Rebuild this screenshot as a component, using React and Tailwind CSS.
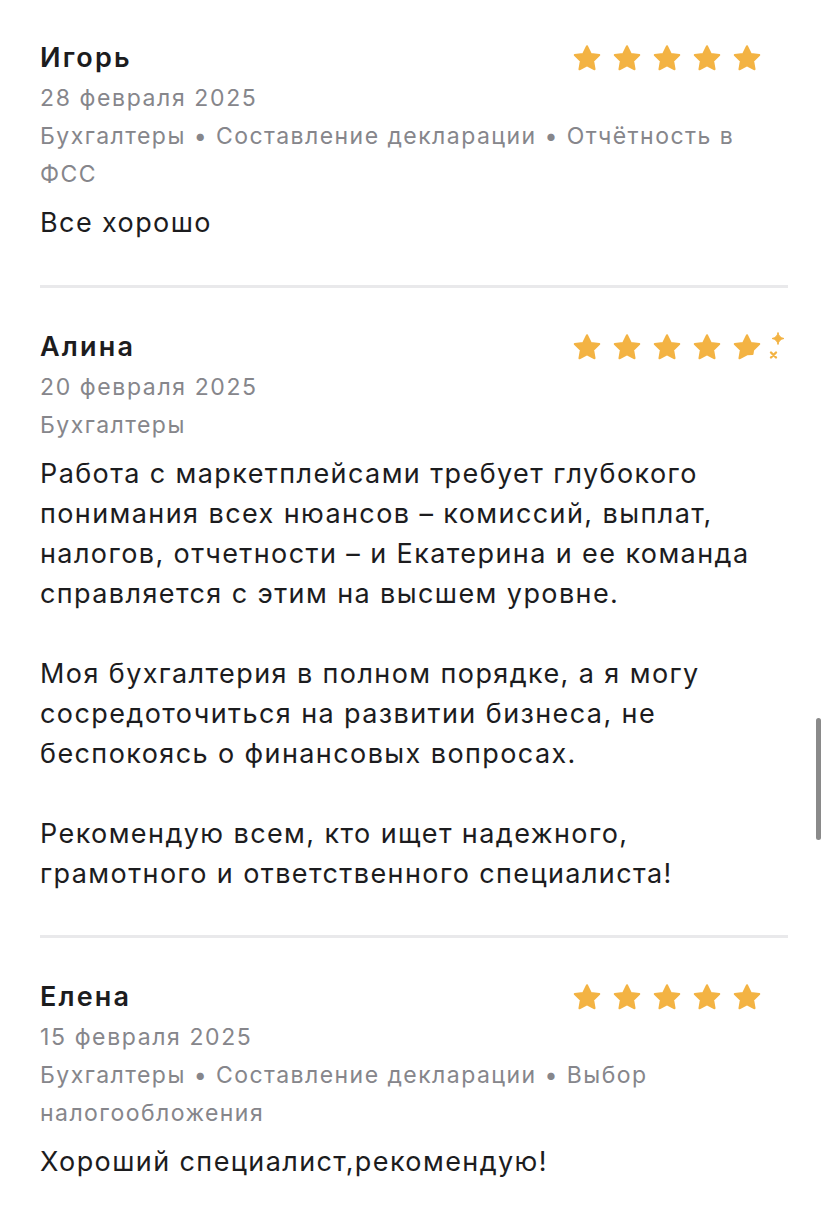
import React from 'react';

const STAR = '12 2.6 15.05 8.7 21.8 9.65 16.9 14.35 18.05 21 12 17.85 5.95 21 7.1 14.35 2.2 9.65 8.95 8.7';
const CUT_STAR = '12 2.6 15.05 8.7 21.8 9.65 16.9 14.35 16.4 17.6 12 17.85 5.95 21 7.1 14.35 2.2 9.65 8.95 8.7';

const Star = ({ cut }) => (
  <svg width="30" height="30" viewBox="0 0 24 24" className="shrink-0">
    <polygon
      points={cut ? CUT_STAR : STAR}
      fill="#f3b343"
      stroke="#f3b343"
      strokeWidth="1.6"
      strokeLinejoin="round"
    />
  </svg>
);

const Rating = ({ half }) => (
  <div className="relative flex w-[216px] shrink-0 gap-[10px]">
    <Star />
    <Star />
    <Star />
    <Star />
    <Star cut={half} />
    {half && (
      <svg width="26" height="34" viewBox="0 0 26 34" className="absolute left-[191px] top-[-1px]">
        <path d="M15 1.5 Q15.8 6.7 21 7.5 Q15.8 8.3 15 13.5 Q14.2 8.3 9 7.5 Q14.2 6.7 15 1.5 Z" fill="#f3b343" stroke="#f3b343" strokeWidth="1" strokeLinejoin="round" />
        <path d="M8 21.5 L13 26.5 M13 21.5 L8 26.5" stroke="#f3b343" strokeWidth="2.4" strokeLinecap="round" />
      </svg>
    )}
  </div>
);

const reviews = [
  {
    name: 'Игорь',
    date: '28 февраля 2025',
    tags: ['Бухгалтеры', 'Составление декларации', 'Отчётность в ФСС'],
    body: ['Все хорошо'],
  },
  {
    name: 'Алина',
    date: '20 февраля 2025',
    tags: ['Бухгалтеры'],
    half: true,
    body: [
      'Работа с маркетплейсами требует глубокого понимания всех нюансов – комиссий, выплат, налогов, отчетности – и Екатерина и ее команда справляется с этим на высшем уровне.',
      'Моя бухгалтерия в полном порядке, а я могу сосредоточиться на развитии бизнеса, не беспокоясь о финансовых вопросах.',
      'Рекомендую всем, кто ищет надежного, грамотного и ответственного специалиста!',
    ],
  },
  {
    name: 'Елена',
    date: '15 февраля 2025',
    tags: ['Бухгалтеры', 'Составление декларации', 'Выбор налогообложения'],
    body: ['Хороший специалист,рекомендую!'],
  },
];

const Review = ({ r, first }) => (
  <div className={first ? 'pt-[38px] pb-[42px]' : 'pt-[39px] pb-[41px]'}>
    <div className="flex items-center justify-between">
      <div className="text-[27px] leading-[40px] font-semibold tracking-[0.08em] text-[#1c1c1e]">{r.name}</div>
      <Rating half={r.half} />
    </div>
    <div className="text-[23px] leading-[38px] tracking-[0.07em] text-[#86868b] mt-px">{r.date}</div>
    <div className="text-[23px] leading-[38px] tracking-[0.063em] text-[#86868b]">{r.tags.join(' • ')}</div>
    <div className="mt-[10px] flex flex-col gap-[40px] text-[27px] leading-[40px] tracking-[0.052em] text-[#1c1c1e]">
      {r.body.map((p, i) => (
        <p key={i}>{p}</p>
      ))}
    </div>
  </div>
);

export default function App() {
  return (
    <div
      className="relative min-h-[1208px] bg-white px-[40px] overflow-hidden"
      style={{ fontFamily: 'Inter, "Noto Sans", sans-serif' }}
    >
      {reviews.map((r, i) => (
        <React.Fragment key={r.name}>
          {i > 0 && <div className="h-[3px] bg-[#e9e9eb]" />}
          <Review r={r} first={i === 0} />
        </React.Fragment>
      ))}
      <div className="absolute left-[816px] top-[718px] h-[122px] w-[5px] rounded-full bg-[#8a8a8a]" />
    </div>
  );
}
